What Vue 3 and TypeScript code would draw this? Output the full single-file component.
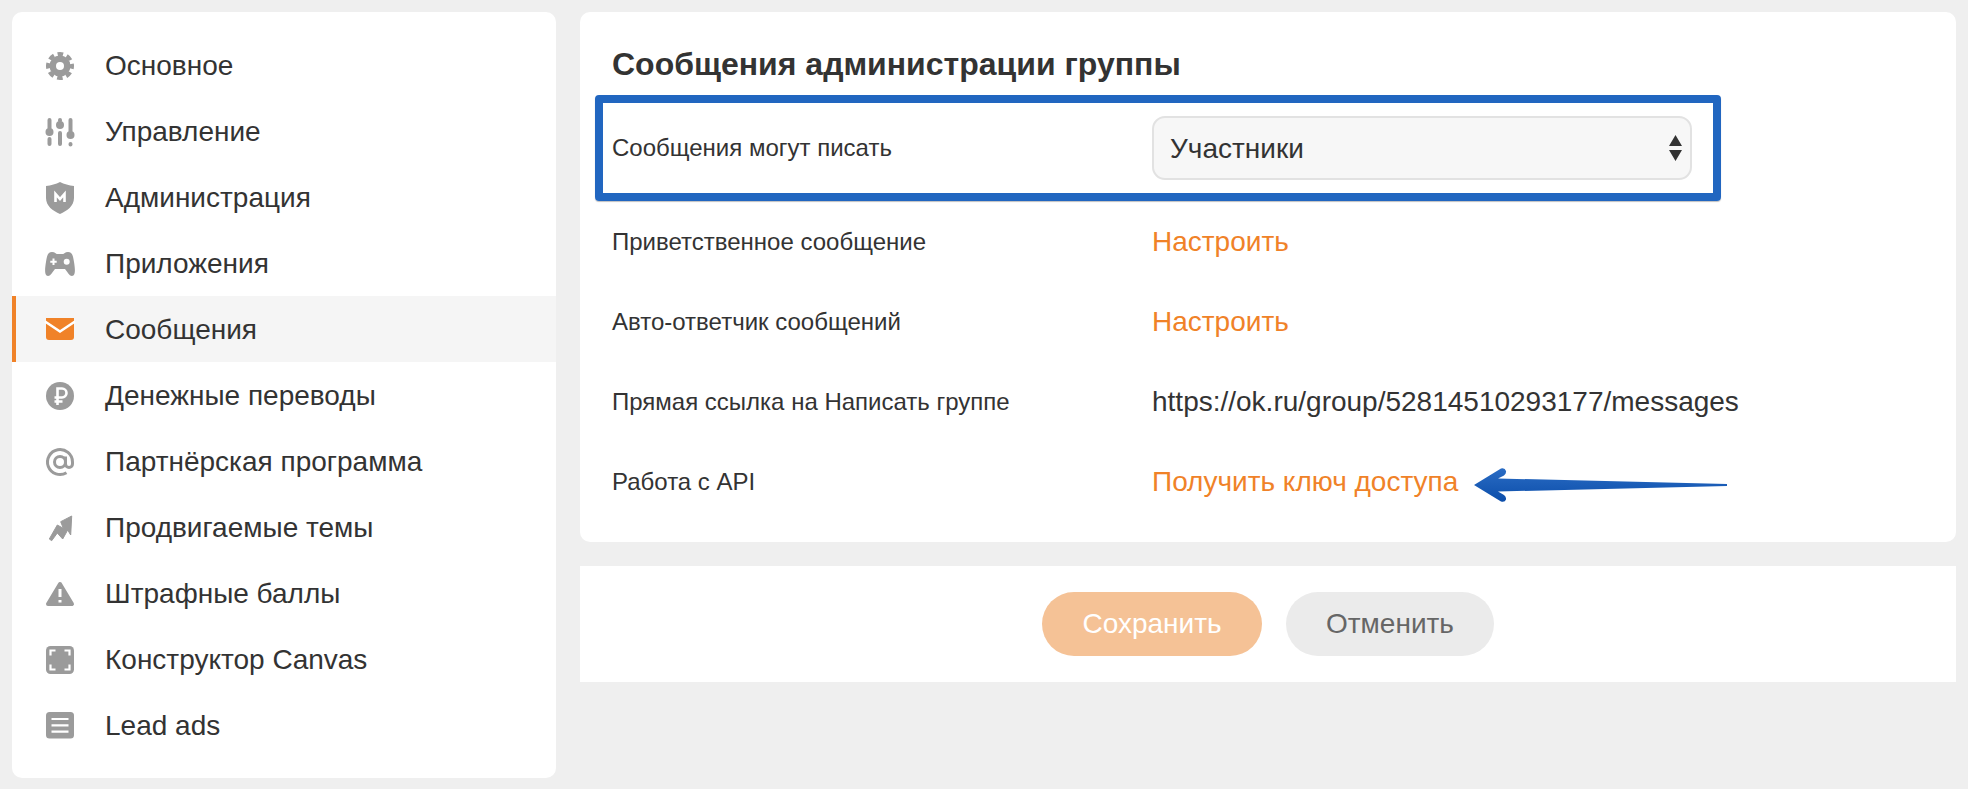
<script setup lang="ts">
interface NavItem { label: string; icon: string; active?: boolean }
const items: NavItem[] = [
  { label: 'Основное', icon: 'gear' },
  { label: 'Управление', icon: 'sliders' },
  { label: 'Администрация', icon: 'shield' },
  { label: 'Приложения', icon: 'pad' },
  { label: 'Сообщения', icon: 'mail', active: true },
  { label: 'Денежные переводы', icon: 'ruble' },
  { label: 'Партнёрская программа', icon: 'at' },
  { label: 'Продвигаемые темы', icon: 'trend' },
  { label: 'Штрафные баллы', icon: 'warn' },
  { label: 'Конструктор Canvas', icon: 'canvas' },
  { label: 'Lead ads', icon: 'lead' },
]
</script>

<template>
  <div class="page">
    <nav class="side">
      <a v-for="it in items" :key="it.label" class="nav" :class="{ active: it.active }">
        <svg class="ico" viewBox="0 0 36 36" width="36" height="36">
          <template v-if="it.icon === 'gear'">
            <circle cx="18" cy="19" r="10.5" fill="#9b9b9b" />
            <circle cx="18" cy="19" r="12" fill="none" stroke="#9b9b9b" stroke-width="4" stroke-dasharray="5.6 3.825" stroke-dashoffset="2.8" />
            <circle cx="18" cy="19" r="4" fill="#fff" />
          </template>
          <template v-else-if="it.icon === 'sliders'">
            <g stroke="#9b9b9b" stroke-width="4" stroke-linecap="round" fill="none">
              <path d="M7.5 7v8M7.5 26v5M18 7v0.5M18 20v11M28.5 7v11M28.5 31v0.5" />
            </g>
            <g fill="#9b9b9b">
              <circle cx="7.5" cy="19" r="4" />
              <circle cx="18" cy="12" r="4" />
              <circle cx="28.5" cy="22" r="4" />
            </g>
          </template>
          <template v-else-if="it.icon === 'shield'">
            <path d="M18 3C22 5 27 6.5 32 7V19C32 27 25 32 18 35C11 32 4 27 4 19V7C9 6.5 14 5 18 3Z" fill="#9b9b9b" />
            <path d="M13.5 23V15L18 20L22.5 15V23" fill="none" stroke="#fff" stroke-width="2.6" />
          </template>
          <template v-else-if="it.icon === 'pad'">
            <path d="M10 7C13 7 14 9 15 9H21C22 9 23 7 26 7C30 7 31 10 32 17C33 23 34 31 30 31C27 31 25 26 23 24H13C11 26 9 31 6 31C2 31 3 23 4 17C5 10 6 7 10 7Z" fill="#9b9b9b" />
            <path d="M11.5 13.5v6.4M8.3 16.7h6.4" stroke="#fff" stroke-width="2" fill="none" />
            <circle cx="24.7" cy="16.7" r="3" fill="#fff" />
          </template>
          <template v-else-if="it.icon === 'mail'">
            <path d="M4 7H32V26Q32 29 29 29H7Q4 29 4 26Z" fill="#f08228" />
            <path d="M3 10.5L18 20.5L33 10.5" fill="none" stroke="#fff" stroke-width="2.6" />
          </template>
          <template v-else-if="it.icon === 'ruble'">
            <circle cx="18" cy="19" r="14" fill="#9b9b9b" />
            <path d="M15.5 28V11.5H20a4.5 4.5 0 0 1 0 9H12.5M12.5 24.5h8" fill="none" stroke="#fff" stroke-width="2.6" />
          </template>
          <template v-else-if="it.icon === 'at'">
            <circle cx="18" cy="19" r="5.5" fill="none" stroke="#9b9b9b" stroke-width="3" />
            <path d="M23.5 13.5V21a3.5 3.5 0 0 0 7 0V19a12.5 12.5 0 1 0-6 10.7" fill="none" stroke="#9b9b9b" stroke-width="3" />
          </template>
          <template v-else-if="it.icon === 'trend'">
            <polygon points="7.3,30 15.3,16 21.3,19.3 18.7,12.7 29.7,7 28.7,26 25.7,21 20.7,30 15.3,24 9.7,31.7" fill="#9b9b9b" stroke="#9b9b9b" stroke-width="1" stroke-linejoin="round" />
          </template>
          <template v-else-if="it.icon === 'warn'">
            <polygon points="18,9 30,29 6,29" fill="#9b9b9b" stroke="#9b9b9b" stroke-width="4" stroke-linejoin="round" />
            <path d="M18 14V22M18 25V27.5" stroke="#fff" stroke-width="3" fill="none" />
          </template>
          <template v-else-if="it.icon === 'canvas'">
            <rect x="4" y="5" width="28" height="28" rx="4.5" fill="#9b9b9b" />
            <path d="M8.5 14.5V9.5H13.5M22.5 9.5H27.5V14.5M27.5 23.5V28.5H22.5M13.5 28.5H8.5V23.5" fill="none" stroke="#fff" stroke-width="2.2" />
          </template>
          <template v-else>
            <rect x="4" y="5" width="28" height="26.5" rx="3.5" fill="#9b9b9b" />
            <path d="M9.5 12H26.5M9.5 18.3H26.5M9.5 24.6H26.5" stroke="#fff" stroke-width="2.2" fill="none" />
          </template>
        </svg>
        <span class="nav-text">{{ it.label }}</span>
      </a>
    </nav>

    <main class="main">
      <section class="card">
        <h2 class="title">Сообщения администрации группы</h2>
        <div class="row first">
          <span class="label">Сообщения могут писать</span>
          <div class="select-wrap">
            <select class="select">
              <option>Участники</option>
            </select>
            <svg class="carets" viewBox="0 0 13 26" width="13" height="26">
              <path d="M6.5 0L13 11H0ZM0 15H13L6.5 26Z" fill="#333" />
            </svg>
          </div>
          <div class="highlight"></div>
        </div>
        <div class="row">
          <span class="label">Приветственное сообщение</span>
          <a class="link">Настроить</a>
        </div>
        <div class="row">
          <span class="label">Авто-ответчик сообщений</span>
          <a class="link">Настроить</a>
        </div>
        <div class="row">
          <span class="label">Прямая ссылка на Написать группе</span>
          <span class="value">https://ok.ru/group/52814510293177/messages</span>
        </div>
        <div class="row">
          <span class="label">Работа с API</span>
          <a class="link">Получить ключ доступа</a>
          <svg class="arrow" viewBox="0 0 254 36" width="254" height="36">
            <defs>
              <linearGradient id="arrowFill" x1="0" y1="0" x2="0" y2="1">
                <stop offset="0" stop-color="#2a6cc4" />
                <stop offset="1" stop-color="#0c4eaa" />
              </linearGradient>
            </defs>
            <path d="M0 18L27 1.5Q31 0.5 32 4Q32.5 6.5 30 8.5L24 11.5L253 17V19L24 24.5L30 28Q32.5 30 32 32.5Q31 35.5 27 34.5Z" fill="url(#arrowFill)" />
          </svg>
        </div>
      </section>
      <section class="actions">
        <button class="btn save" type="button">Сохранить</button>
        <button class="btn cancel" type="button">Отменить</button>
      </section>
    </main>
  </div>
</template>

<style scoped>
.page {
  display: flex;
  align-items: flex-start;
  gap: 24px;
  padding: 12px;
  font-family: "Liberation Sans", Arial, sans-serif;
  color: #333;
}
.side {
  width: 544px;
  flex: none;
  box-sizing: border-box;
  padding: 20px 0;
  background: #fff;
  border-radius: 10px;
  overflow: hidden;
}
.nav {
  display: flex;
  align-items: center;
  height: 66px;
  padding-left: 30px;
  gap: 27px;
  font-size: 28px;
  box-sizing: border-box;
  position: relative;
}
.nav-text {
  padding-top: 2px;
}
.nav.active {
  background: #f5f5f5;
}
.nav.active::before {
  content: "";
  position: absolute;
  left: 0;
  top: 0;
  bottom: 0;
  width: 4px;
  background: #f08228;
}
.ico {
  flex: none;
}
.main {
  width: 1376px;
  flex: none;
  display: flex;
  flex-direction: column;
  gap: 24px;
}
.card {
  background: #fff;
  border-radius: 10px;
  padding: 0 32px 20px;
}
.title {
  margin: 0;
  padding: 32px 0 10px;
  font-size: 32px;
  line-height: 40px;
  font-weight: 700;
  color: #333;
}
.row {
  display: grid;
  grid-template-columns: 540px 1fr;
  align-items: center;
  height: 80px;
  position: relative;
}
.row.first {
  height: 108px;
}
.label {
  font-size: 24px;
}
.link {
  font-size: 28px;
  color: #f08228;
}
.value {
  font-size: 28px;
  white-space: nowrap;
}
.select-wrap {
  position: relative;
  width: 540px;
}
.select {
  display: block;
  appearance: none;
  width: 100%;
  height: 64px;
  box-sizing: border-box;
  padding: 0 16px;
  font: inherit;
  font-size: 28px;
  color: #333;
  background: #f7f7f7;
  border: 2px solid #e2e2e2;
  border-radius: 13px;
  outline: none;
}
.carets {
  position: absolute;
  right: 10px;
  top: 19px;
  pointer-events: none;
}
.highlight {
  position: absolute;
  left: -17px;
  top: 1px;
  width: 1126px;
  height: 106px;
  box-sizing: border-box;
  border: 8px solid #2166c0;
  border-radius: 4px;
  box-shadow: 0 1px 1px rgba(0, 0, 0, 0.25);
  pointer-events: none;
}
.arrow {
  position: absolute;
  left: 862px;
  top: 25px;
}
.actions {
  display: flex;
  justify-content: center;
  align-items: center;
  gap: 24px;
  height: 116px;
  background: #fff;
}
.btn {
  height: 64px;
  border: 0;
  border-radius: 32px;
  font-family: inherit;
  font-size: 28px;
}
.save {
  width: 220px;
  background: #f5c296;
  color: #fff;
}
.cancel {
  width: 208px;
  background: #ebebeb;
  color: #666;
}
</style>

<style>
html,
body {
  background: #efefef;
  margin: 0;
}
</style>
